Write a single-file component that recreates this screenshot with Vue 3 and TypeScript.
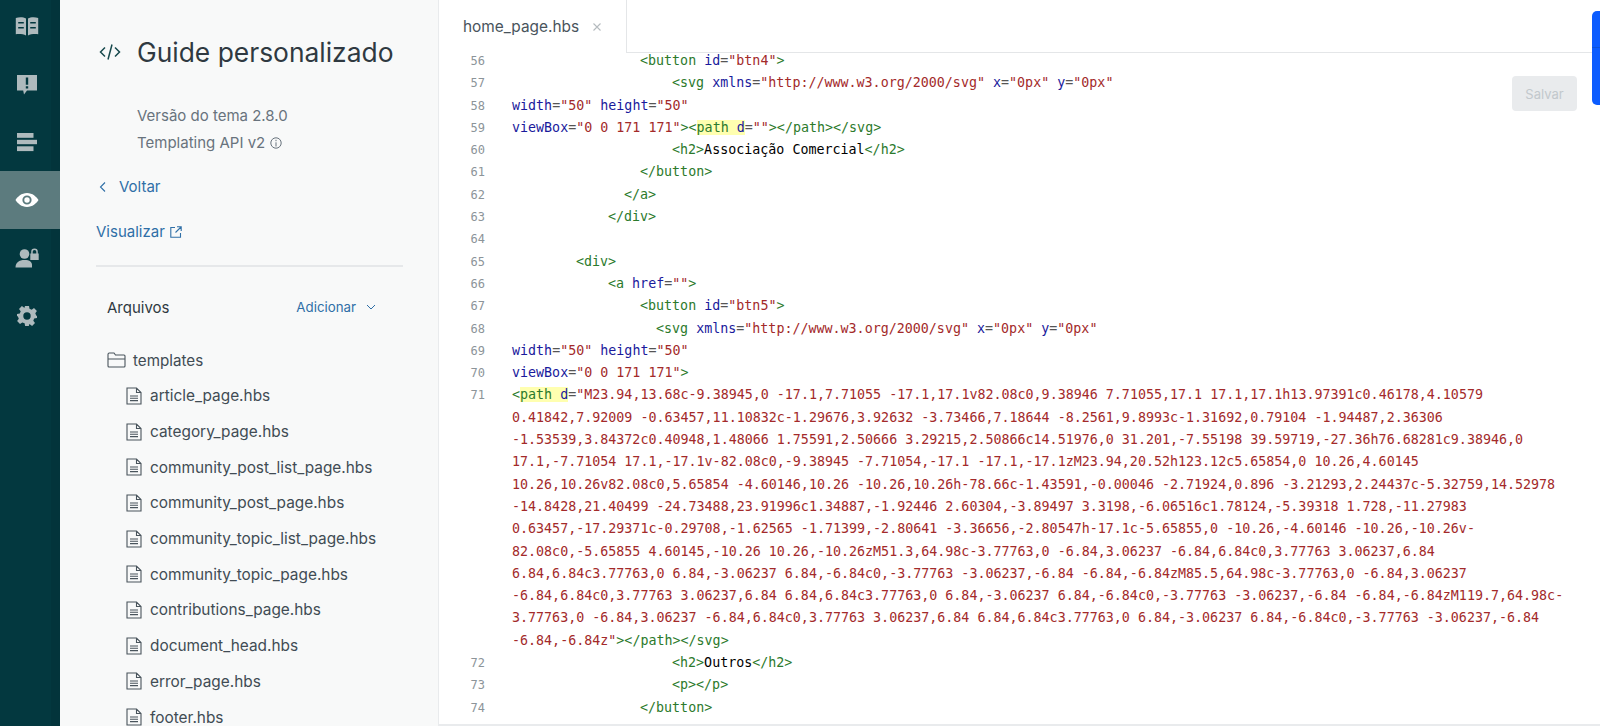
<script setup lang="ts">
type Seg = [string, string]
interface Row { n: string; pad: number; segs: Seg[] }

const t = (s: string): Seg => ['tag', s]
const a = (s: string): Seg => ['attr', s]
const e = (s: string): Seg => ['eq', s]
const v = (s: string): Seg => ['str', s]
const x = (s: string): Seg => ['txt', s]

const wrap = (s: string, n = ''): Row => ({ n, pad: 0, segs: [v(s)] })

const rows: Row[] = [
  { n: '56', pad: 16, segs: [t('<button '), a('id'), e('='), v('"btn4"'), t('>')] },
  { n: '57', pad: 20, segs: [t('<svg '), a('xmlns'), e('='), v('"http://www.w3.org/2000/svg"'), x(' '), a('x'), e('='), v('"0px"'), x(' '), a('y'), e('='), v('"0px"')] },
  { n: '58', pad: 0, segs: [a('width'), e('='), v('"50"'), x(' '), a('height'), e('='), v('"50"')] },
  { n: '59', pad: 0, segs: [a('viewBox'), e('='), v('"0 0 171 171"'), t('><'), ['tag hl', 'path '], ['attr hl', 'd'], e('='), v('""'), t('></path></svg>')] },
  { n: '60', pad: 20, segs: [t('<h2>'), x('Associação Comercial'), t('</h2>')] },
  { n: '61', pad: 16, segs: [t('</button>')] },
  { n: '62', pad: 14, segs: [t('</a>')] },
  { n: '63', pad: 12, segs: [t('</div>')] },
  { n: '64', pad: 0, segs: [] },
  { n: '65', pad: 8, segs: [t('<div>')] },
  { n: '66', pad: 12, segs: [t('<a '), a('href'), e('='), v('""'), t('>')] },
  { n: '67', pad: 16, segs: [t('<button '), a('id'), e('='), v('"btn5"'), t('>')] },
  { n: '68', pad: 18, segs: [t('<svg '), a('xmlns'), e('='), v('"http://www.w3.org/2000/svg"'), x(' '), a('x'), e('='), v('"0px"'), x(' '), a('y'), e('='), v('"0px"')] },
  { n: '69', pad: 0, segs: [a('width'), e('='), v('"50"'), x(' '), a('height'), e('='), v('"50"')] },
  { n: '70', pad: 0, segs: [a('viewBox'), e('='), v('"0 0 171 171"'), t('>')] },
  { n: '71', pad: 0, segs: [t('<'), ['tag hl', 'path '], ['attr hl', 'd'], e('='), v('"M23.94,13.68c-9.38945,0 -17.1,7.71055 -17.1,17.1v82.08c0,9.38946 7.71055,17.1 17.1,17.1h13.97391c0.46178,4.10579')] },
  wrap('0.41842,7.92009 -0.63457,11.10832c-1.29676,3.92632 -3.73466,7.18644 -8.2561,9.8993c-1.31692,0.79104 -1.94487,2.36306'),
  wrap('-1.53539,3.84372c0.40948,1.48066 1.75591,2.50666 3.29215,2.50866c14.51976,0 31.201,-7.55198 39.59719,-27.36h76.68281c9.38946,0'),
  wrap('17.1,-7.71054 17.1,-17.1v-82.08c0,-9.38945 -7.71054,-17.1 -17.1,-17.1zM23.94,20.52h123.12c5.65854,0 10.26,4.60145'),
  wrap('10.26,10.26v82.08c0,5.65854 -4.60146,10.26 -10.26,10.26h-78.66c-1.43591,-0.00046 -2.71924,0.896 -3.21293,2.24437c-5.32759,14.52978'),
  wrap('-14.8428,21.40499 -24.73488,23.91996c1.34887,-1.92446 2.60304,-3.89497 3.3198,-6.06516c1.78124,-5.39318 1.728,-11.27983'),
  wrap('0.63457,-17.29371c-0.29708,-1.62565 -1.71399,-2.80641 -3.36656,-2.80547h-17.1c-5.65855,0 -10.26,-4.60146 -10.26,-10.26v-'),
  wrap('82.08c0,-5.65855 4.60145,-10.26 10.26,-10.26zM51.3,64.98c-3.77763,0 -6.84,3.06237 -6.84,6.84c0,3.77763 3.06237,6.84'),
  wrap('6.84,6.84c3.77763,0 6.84,-3.06237 6.84,-6.84c0,-3.77763 -3.06237,-6.84 -6.84,-6.84zM85.5,64.98c-3.77763,0 -6.84,3.06237'),
  wrap('-6.84,6.84c0,3.77763 3.06237,6.84 6.84,6.84c3.77763,0 6.84,-3.06237 6.84,-6.84c0,-3.77763 -3.06237,-6.84 -6.84,-6.84zM119.7,64.98c-'),
  wrap('3.77763,0 -6.84,3.06237 -6.84,6.84c0,3.77763 3.06237,6.84 6.84,6.84c3.77763,0 6.84,-3.06237 6.84,-6.84c0,-3.77763 -3.06237,-6.84'),
  { n: '', pad: 0, segs: [v('-6.84,-6.84z"'), t('></path></svg>')] },
  { n: '72', pad: 20, segs: [t('<h2>'), x('Outros'), t('</h2>')] },
  { n: '73', pad: 20, segs: [t('<p></p>')] },
  { n: '74', pad: 16, segs: [t('</button>')] },
]

const files = [
  'article_page.hbs',
  'category_page.hbs',
  'community_post_list_page.hbs',
  'community_post_page.hbs',
  'community_topic_list_page.hbs',
  'community_topic_page.hbs',
  'contributions_page.hbs',
  'document_head.hbs',
  'error_page.hbs',
  'footer.hbs',
]
</script>

<template>
  <div class="app">
    <nav class="rail">
      <div class="rail-item">
        <svg width="24" height="20" viewBox="0 0 24 20"><path fill-rule="evenodd" d="M.8 2C4 1 8.500 1 11 2.600V19.400C8.500 18 4 17.800 .8 18.200ZM13 2.600C15.500 1 20 1 23.200 2V18.200C20 17.800 15.500 18 13 19.400ZM3.200 6V7.600H8.800V6ZM15.200 6V7.600H20.800V6ZM3.200 11V12.600H8.800V11ZM15.200 11V12.600H20.800V11Z"/></svg>
      </div>
      <div class="rail-item">
        <svg width="22" height="21" viewBox="0 0 22 21"><path fill-rule="evenodd" d="M1 1H21V16.500H11L8 20.500 7.200 16.500H1ZM9.800 3.600V10.800H12.200V3.600ZM9.800 12.200V14.600H12.200V12.200Z"/></svg>
      </div>
      <div class="rail-item">
        <svg width="22" height="20" viewBox="0 0 22 20"><rect x="1" y="1" width="16.500" height="4.800"/><rect x="1" y="7.800" width="20" height="4.400"/><rect x="1" y="14.300" width="16.500" height="4.800"/></svg>
      </div>
      <div class="rail-item active">
        <svg width="24" height="22" viewBox="0 0 24 22"><path fill-rule="evenodd" d="M12 4C17.500 4 21.500 7.800 23.500 11 21.500 14.200 17.500 18 12 18 6.500 18 2.500 14.200 .5 11 2.500 7.800 6.500 4 12 4ZM12 6.400A4.600 4.600 0 1 0 12 15.600 4.600 4.600 0 1 0 12 6.400ZM12 8.300A2.700 2.700 0 1 1 12 13.700 2.700 2.700 0 1 1 12 8.300Z"/></svg>
      </div>
      <div class="rail-item">
        <svg width="24" height="20" viewBox="0 0 24 20"><circle cx="9.500" cy="6" r="4.800"/><path d="M.5 19.500C.5 14.500 4 12 9.500 12S16.500 14 17 16.500V19.500Z"/><path fill-rule="evenodd" d="M15.300 5.500H16.200V3.800A3.300 3.300 0 0 1 22.800 3.800V5.500H23.700V12H15.300ZM17.700 5.500H21.300V3.800A1.800 1.800 0 0 0 17.700 3.800Z"/></svg>
      </div>
      <div class="rail-item">
        <svg width="22" height="22" viewBox="0 0 22 22"><path fill-rule="evenodd" d="M9 1H13L13.500 3.800 15.700 4.700 18 3 20.900 5.900 19.300 8.200 20.200 10.400 21 11V11.100L21 13 18.200 13.500 17.300 15.700 19 18 16.100 20.900 13.800 19.300 13 19.600 12.900 21H9.100L8.600 18.300 6.300 17.400 4 19 1.100 16.100 2.800 13.800 1.900 11.600 1 11V9L3.800 8.500 4.700 6.300 3 4 5.900 1.100 8.200 2.800 8.500 2.700ZM11 7.300A3.700 3.700 0 1 0 11 14.700 3.700 3.700 0 1 0 11 7.300Z"/></svg>
      </div>
    </nav>

    <aside class="panel">
      <header class="title-row">
        <svg class="code-ico" width="22" height="16" viewBox="0 0 22 16" fill="none" stroke="#17494d" stroke-width="1.500"><path d="M6 3.500 1.500 8 6 12.500M16 3.500 20.500 8 16 12.500M13 .5 9 15.500"/></svg>
        <h1>Guide personalizado</h1>
      </header>
      <div class="meta">
        <div>Versão do tema 2.8.0</div>
        <div class="meta-api">Templating API v2
          <svg width="12" height="12" viewBox="0 0 12 12" fill="none" stroke="#68737d"><circle cx="6" cy="6" r="5.200"/><path d="M6 5.300V9.500M6 2.800V4.200"/></svg>
        </div>
      </div>
      <a class="back">
        <svg width="8" height="12" viewBox="0 0 8 12" fill="none" stroke="#2f6fa7" stroke-width="1.100"><path d="M6 1.500 1.500 6 6 10.500"/></svg>
        <span>Voltar</span>
      </a>
      <a class="preview">
        <span>Visualizar</span>
        <svg width="12" height="12" viewBox="0 0 12 12" fill="none" stroke="#2f6fa7" stroke-width="1.100"><path d="M5 1.500H.8V11.200H10.500V7M7 .8H11.200V5M11 1 5.500 6.500"/></svg>
      </a>
      <hr class="rule" />
      <div class="files-head">
        <span class="files-title">Arquivos</span>
        <span class="add">Adicionar
          <svg width="10" height="6" viewBox="0 0 10 6" fill="none" stroke="#2f6fa7" stroke-width="1"><path d="M1 1 5 5 9 1"/></svg>
        </span>
      </div>
      <div class="folder">
        <svg width="19" height="16" viewBox="0 0 19 16" fill="none" stroke="#49545c" stroke-width="1.100"><path d="M1 14V2.500C1 1.700 1.500 1 2.300 1H7L8.500 3H17C17.600 3 18 3.500 18 4V14C18 14.600 17.600 15 17 15H2C1.400 15 1 14.600 1 14ZM1 7H18"/></svg>
        <span>templates</span>
      </div>
      <ul class="files">
        <li v-for="f in files" :key="f">
          <svg width="16" height="18" viewBox="0 0 16 18" fill="none" stroke="#49545c" stroke-width="1.100"><path d="M1 1H10.500L15 5.500V17H1ZM10.500 1V5.500H15M4 9H12M4 11.300H12M4 13.600H12"/></svg>
          <span>{{ f }}</span>
        </li>
      </ul>
    </aside>

    <main class="editor">
      <div class="tabs">
        <div class="tab">
          <span>home_page.hbs</span>
          <svg width="10" height="10" viewBox="0 0 10 10" fill="none" stroke="#b5bbbf" stroke-width="1.100"><path d="M1.500 1.500 8.500 8.500M8.500 1.500 1.500 8.500"/></svg>
        </div>
        <div class="tab-rest"></div>
      </div>
      <div class="code">
        <div v-for="(r, i) in rows" :key="i" class="row">
          <span class="num">{{ r.n }}</span>
          <span class="src" :style="{ paddingLeft: r.pad * 8 + 'px' }"><span v-for="(s, j) in r.segs" :key="j" :class="s[0]">{{ s[1] }}</span></span>
        </div>
      </div>
      <button class="save" type="button">Salvar</button>
      <div class="blue-tab"></div>
    </main>
  </div>
</template>

<style>
html, body { margin: 0; padding: 0; background: #fff; overflow: hidden; }
</style>

<style scoped>
.app {
  display: flex;
  width: 1600px;
  height: 726px;
  overflow: hidden;
  font-family: Inter, "Noto Sans", sans-serif;
}
.rail {
  width: 60px;
  flex: none;
  background: linear-gradient(90deg, #03383f 0 51px, #03343b 51px);
}
.rail-item {
  height: 58px;
  box-sizing: border-box;
  padding-right: 7px;
  display: flex;
  align-items: center;
  justify-content: center;
  fill: #aebabd;
  position: relative;
  top: -3px;
}
.rail-item.active {
  background: #5c7b7e;
  fill: #fff;
}
.panel {
  width: 379px;
  flex: none;
  box-sizing: border-box;
  height: 726px;
  overflow: hidden;
  background: #f8f9f9;
  border-right: 1px solid #e9ebed;
  padding: 36px 35px 0 36px;
}
.title-row {
  display: flex;
  align-items: center;
  height: 32px;
}
.code-ico { margin-left: 3px; margin-right: 16px; flex: none; }
h1 {
  margin: 0;
  font-size: 26.4px;
  font-weight: 400;
  color: #2f3941;
  white-space: nowrap;
}
.meta {
  margin: 34px 0 0 41px;
  font-size: 15px;
  line-height: 27px;
  color: #68737d;
}
.meta-api { display: flex; align-items: center; gap: 5px; }
.back, .preview {
  display: flex;
  align-items: center;
  color: #2f6fa7;
  font-size: 15px;
  line-height: 20px;
}
.back { margin: 21px 0 0 3px; gap: 12px; }
.preview { margin-top: 25px; gap: 5px; }
.rule {
  margin: 23px 0 0;
  border: 0;
  height: 2px;
  background: #e6e8ea;
}
.files-head {
  margin-top: 30px;
  padding: 0 27px 0 11px;
  height: 20px;
  display: flex;
  align-items: center;
  justify-content: space-between;
  font-size: 15px;
}
.files-title { color: #2f3941; }
.add { display: flex; align-items: center; gap: 10px; color: #2f6fa7; font-size: 13.300px; }
.folder {
  margin: 33px 0 0 11px;
  height: 20px;
  display: flex;
  align-items: center;
  gap: 7px;
  font-size: 15.200px;
  color: #414c54;
}
.files {
  list-style: none;
  margin: 8px 0 0;
  padding: 0 0 0 30px;
}
.files li {
  height: 35.700px;
  display: flex;
  align-items: center;
  gap: 8px;
  font-size: 15.400px;
  color: #414c54;
  white-space: nowrap;
}
.editor {
  position: relative;
  flex: 1;
  height: 726px;
  overflow: hidden;
  background: #fff;
  box-sizing: border-box;
  border-bottom: 2px solid #e9ebed;
  min-width: 0;
}
.tabs { display: flex; height: 53px; }
.tab {
  width: 188px;
  flex: none;
  box-sizing: border-box;
  padding-left: 24px;
  display: flex;
  align-items: center;
  gap: 13px;
  font-size: 15.400px;
  color: #49545c;
  border-right: 1px solid #e4e6e8;
}
.tab-rest { flex: 1; border-bottom: 1px solid #e4e6e8; }
.code {
  margin-top: -3px;
  font-family: "DejaVu Sans Mono", "Liberation Mono", monospace;
  font-size: 13.330px;
}
.row { display: flex; height: 22.300px; line-height: 22.300px; white-space: pre; }
.num { width: 46px; flex: none; text-align: right; color: #8c9499; font-size: 12px; }
.src { margin-left: 27px; }
.tag { color: #2c7a2c; }
.attr { color: #1a1a9c; }
.eq { color: #555; }
.str { color: #a32a2a; }
.txt { color: #000; }
.hl { background: #ffffb0; }
.save {
  position: absolute;
  left: 1073px;
  top: 76px;
  width: 65px;
  height: 35px;
  border: 0;
  border-radius: 4px;
  background: #e9ebed;
  color: #c2c8cc;
  font-family: inherit;
  font-size: 13px;
}
.blue-tab {
  position: absolute;
  right: 0;
  top: 11px;
  width: 8px;
  height: 94px;
  background: linear-gradient(#0b5cff 0 36px, #0d52d8 36px 37px, #0b5cff 37px);
  border-radius: 5px 0 0 5px;
}
</style>
